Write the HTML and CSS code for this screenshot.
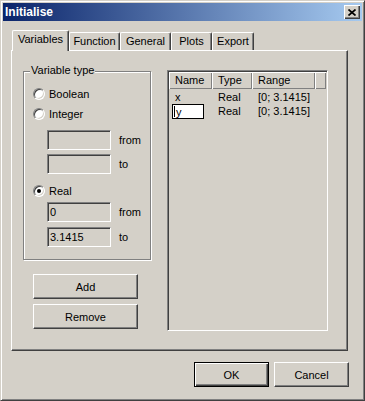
FILE: index.html
```html
<!DOCTYPE html>
<html lang="en">
<head>
  <meta charset="UTF-8">
  <meta name="viewport" content="width=device-width, initial-scale=1.0">
  <title>Initialise</title>
  <link rel="stylesheet" href="styles.css">
</head>
<body>

  <div class="dialog">
    <div class="titlebar">
      <span class="title">Initialise</span>
      <span class="close-btn">
        <svg width="8" height="7" viewBox="0 0 8 7">
          <path d="M0.5 0.5 L7.5 6.5 M7.5 0.5 L0.5 6.5" stroke="#000" stroke-width="1.7" fill="none"/>
        </svg>
      </span>
    </div>

    <div class="dialog-body">
      <div class="tabs">
        <div class="tab tab-variables active">Variables</div>
        <div class="tab tab-function">Function</div>
        <div class="tab tab-general">General</div>
        <div class="tab tab-plots">Plots</div>
        <div class="tab tab-export">Export</div>
      </div>

      <div class="tab-panel">
        <div class="left-col">
          <div class="group">
            <span class="group-title">Variable type</span>

            <div class="radio-row row-boolean"><span class="radio"></span>Boolean</div>
            <div class="radio-row row-integer"><span class="radio"></span>Integer</div>
            <div class="field-row row-int-from"><span class="edit"></span>from</div>
            <div class="field-row row-int-to"><span class="edit"></span>to</div>

            <div class="radio-row row-real"><span class="radio checked"></span>Real</div>
            <div class="field-row row-real-from"><span class="edit">0</span>from</div>
            <div class="field-row row-real-to"><span class="edit">3.1415</span>to</div>
          </div>

          <button class="btn btn-side btn-add">Add</button>
          <button class="btn btn-side btn-remove">Remove</button>
        </div>

        <div class="list-view">
          <div class="list-header">
            <span class="col col-name">Name</span>
            <span class="col col-type">Type</span>
            <span class="col col-range">Range</span>
            <span class="col col-fill"></span>
          </div>
          <div class="list-row">
            <span class="cell col-name">x</span>
            <span class="cell col-type">Real</span>
            <span class="cell col-range">[0; 3.1415]</span>
          </div>
          <div class="list-row">
            <span class="cell col-name cell-editing"><span class="cell-edit"><span class="caret"></span>y</span></span>
            <span class="cell col-type">Real</span>
            <span class="cell col-range">[0; 3.1415]</span>
          </div>
        </div>
      </div>

      <div class="footer">
        <button class="btn btn-dialog btn-default">OK</button>
        <button class="btn btn-dialog">Cancel</button>
      </div>
    </div>
  </div>

</body>
</html>
```

FILE: styles.css
```css
* {
  box-sizing: border-box;
}

body {
  margin: 0;
  background: #d4d0c8;
  font-family: "Liberation Sans", Arial, sans-serif;
  font-size: 11px;
  color: #000;
}

.dialog {
  width: 365px;
  height: 401px;
  padding: 2px;
  background: #d4d0c8;
  border: 1px solid;
  border-color: #d4d0c8 #404040 #404040 #d4d0c8;
  box-shadow: inset 1px 1px 0 #fff, inset -1px -1px 0 #808080;
}

/* title bar */
.titlebar {
  height: 18px;
  display: flex;
  align-items: center;
  justify-content: space-between;
  padding: 0 2px;
  background: linear-gradient(to right, #0a246a, #a6caf0);
}

.title {
  color: #fff;
  font-weight: bold;
  font-size: 12px;
}

.close-btn {
  width: 16px;
  height: 14px;
  display: flex;
  align-items: center;
  justify-content: center;
  background: #d4d0c8;
  box-shadow: inset 1px 1px 0 #fff, inset -1px -1px 0 #404040, inset -2px -2px 0 #808080;
}

/* tabs */
.dialog-body {
  padding: 9px 0 0 8px;
}

.tabs {
  display: flex;
  align-items: flex-end;
  height: 20px;
  padding-left: 1px;
}

.tab {
  height: 18px;
  line-height: 16px;
  text-align: center;
  background: #d4d0c8;
  border-top: 1px solid #fff;
  border-left: 1px solid #fff;
  border-right: 1px solid #404040;
  border-radius: 2px 2px 0 0;
  box-shadow: inset -1px 0 0 #808080;
}

.tab.active {
  position: relative;
  height: 21px;
  margin-bottom: -1px;
  line-height: 16px;
  padding-bottom: 3px;
}

.tab-variables { width: 57px; }
.tab-function { width: 51px; }
.tab-general { width: 51px; }
.tab-plots { width: 41px; }
.tab-export { width: 42px; }

.tab-panel {
  width: 337px;
  height: 301px;
  display: flex;
  align-items: flex-start;
  padding: 19px 0 0 11px;
  border: 1px solid;
  border-color: #fff #404040 #404040 #fff;
  box-shadow: inset -1px -1px 0 #808080;
}

/* left column */
.left-col {
  width: 128px;
  margin-top: 1px;
  display: flex;
  flex-direction: column;
}

.group {
  height: 189px;
  display: flex;
  flex-direction: column;
  padding-left: 9px;
  border: 1px solid #808080;
  box-shadow: inset 1px 1px 0 #fff, 1px 1px 0 #fff;
}

.group-title {
  align-self: flex-start;
  margin: -8px 0 0 -3px;
  padding: 0 1px;
  line-height: 13px;
  background: #d4d0c8;
}

.radio-row {
  display: flex;
  align-items: center;
  gap: 4px;
  height: 13px;
}

.radio {
  width: 12px;
  height: 12px;
  display: flex;
  align-items: center;
  justify-content: center;
  border-radius: 50%;
  background: #fff;
  border: 1px solid;
  border-color: #808080 #fff #fff #808080;
  box-shadow: inset 1px 1px 0 #404040, inset -1px -1px 0 #d4d0c8;
}

.radio.checked::after {
  content: "";
  width: 4px;
  height: 4px;
  border-radius: 50%;
  background: #000;
}

.field-row {
  display: flex;
  align-items: center;
  gap: 8px;
  margin-left: 14px;
}

.edit {
  width: 64px;
  height: 20px;
  padding-left: 2px;
  line-height: 18px;
  background: #d4d0c8;
  border: 1px solid;
  border-color: #808080 #fff #fff #808080;
  box-shadow: inset 1px 1px 0 #404040, inset -1px -1px 0 #d4d0c8;
}

.row-boolean { margin-top: 10px; }
.row-integer { margin-top: 7px; }
.row-int-from { margin-top: 10px; }
.row-int-to { margin-top: 4px; }
.row-real { margin-top: 10px; }
.row-real-from { margin-top: 5px; }
.row-real-to { margin-top: 5px; }

/* buttons */
.btn {
  padding: 0;
  font: inherit;
  color: #000;
  background: #d4d0c8;
  border: 1px solid;
  border-color: #fff #404040 #404040 #fff;
  box-shadow: inset -1px -1px 0 #808080;
}

.btn-side {
  width: 105px;
  height: 25px;
  margin-left: 10px;
}

.btn-add { margin-top: 14px; }
.btn-remove { margin-top: 5px; }

.btn-dialog {
  width: 75px;
  height: 25px;
}

.btn-default {
  border: 1px solid #000;
  box-shadow: inset 1px 1px 0 #fff, inset -1px -1px 0 #404040, inset -2px -2px 0 #808080;
}

/* list view */
.list-view {
  width: 161px;
  height: 261px;
  margin-left: 16px;
  padding: 1px;
  background: #d4d0c8;
  border: 1px solid;
  border-color: #808080 #fff #fff #808080;
  box-shadow: inset 1px 1px 0 #404040, inset -1px -1px 0 #d4d0c8;
}

.list-header {
  display: flex;
  height: 17px;
}

.list-header .col {
  height: 17px;
  line-height: 17px;
  padding-left: 6px;
  box-shadow: inset 1px 1px 0 #fff, inset -1px -1px 0 #808080;
}

.col-name { width: 43px; }
.col-type { width: 40px; }
.col-range { width: 63px; }
.col-fill { flex: 1; }

.list-row {
  display: flex;
  height: 14px;
  line-height: 14px;
}

.list-row:first-of-type,
.list-header + .list-row {
  margin-top: 1px;
}

.cell {
  padding-left: 6px;
  white-space: nowrap;
}

.cell.cell-editing {
  padding-left: 3px;
}

.cell-edit {
  display: flex;
  align-items: center;
  width: 32px;
  height: 15px;
  padding-left: 1px;
  background: #fff;
  border: 1px solid #000;
}

.caret {
  width: 1px;
  height: 11px;
  margin-right: 1px;
  background: #000;
}

/* footer */
.footer {
  width: 338px;
  display: flex;
  justify-content: flex-end;
  gap: 5px;
  margin-top: 11px;
}
```
